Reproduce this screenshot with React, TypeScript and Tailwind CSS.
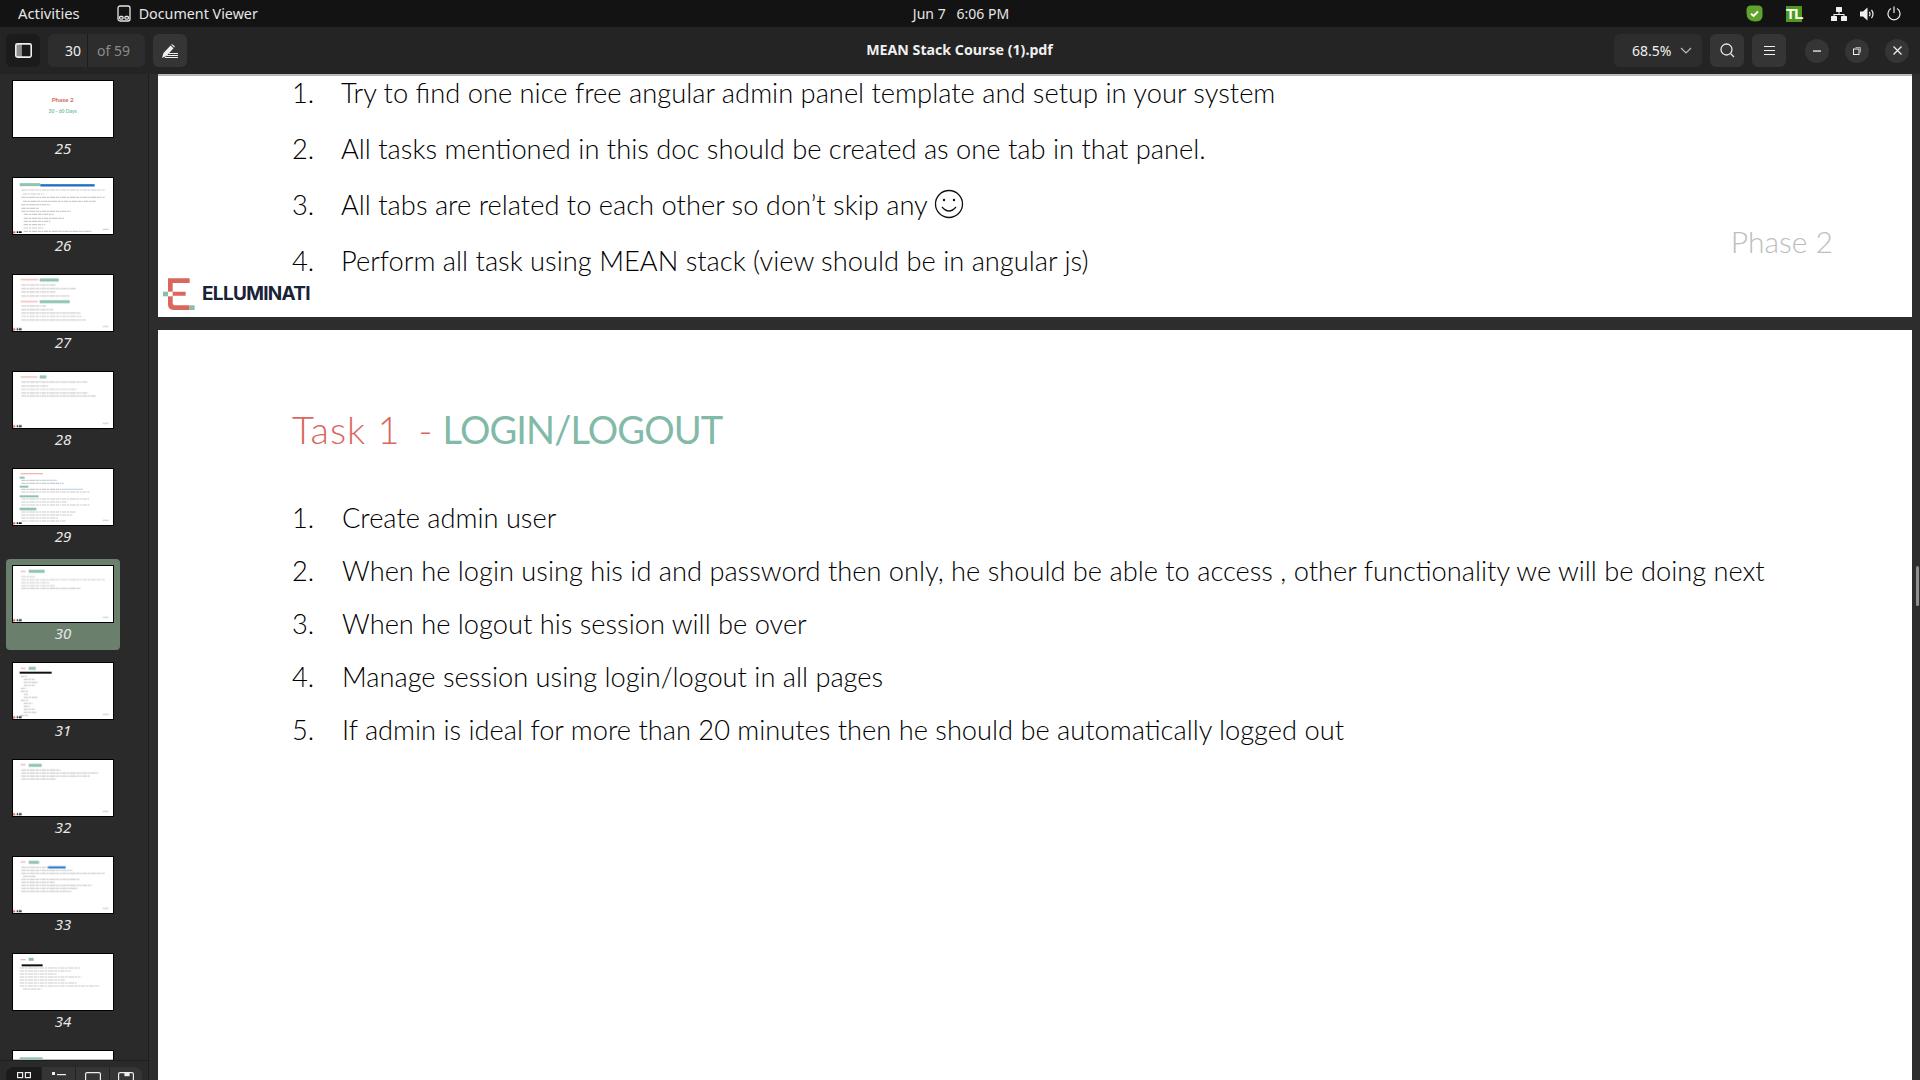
import React from "react";

type Bar = [number, number, number, string?, number?];
const R = "#f0b9b3", T = "#8fc4b2", K = "#111111", B = "#1f6fc4", L = "#c6dcf0";

const thumbs: { n: number; bars: Bar[] }[] = [
  { n: 25, bars: [] },
  { n: 26, bars: [[23, 85, 23, T, 9], [85, 248, 25, B, 7], [28, 278, 39], [32, 96, 51], [28, 278, 61], [33, 251, 73], [28, 115, 83], [28, 80, 94], [28, 176, 103], [35, 125, 112], [35, 155, 124], [35, 115, 133], [35, 100, 143], [35, 95, 153], [35, 238, 163]] },
  { n: 27, bars: [[26, 78, 17, R], [83, 140, 18, T, 9], [28, 131, 33], [28, 193, 44], [28, 131, 54], [28, 173, 66], [26, 78, 83, R], [83, 173, 83, T, 9], [28, 103, 96], [28, 123, 107], [28, 206, 117], [28, 211, 127], [28, 221, 138]] },
  { n: 28, bars: [[26, 76, 18, R], [83, 103, 18, T, 9], [28, 228, 33], [28, 108, 45], [28, 195, 55], [28, 228, 66], [28, 251, 75]] },
  { n: 29, bars: [[26, 93, 17, R], [23, 38, 29, T, 6], [28, 98, 37], [98, 135, 37, L], [28, 155, 46], [23, 49, 56, T, 6], [28, 153, 64], [153, 213, 64, L], [28, 233, 72], [23, 80, 85, T, 6], [28, 231, 93], [28, 163, 102], [28, 235, 111], [23, 73, 123, T, 8], [28, 193, 132], [28, 181, 141], [28, 138, 150], [28, 161, 159]] },
  { n: 30, bars: [[26, 41, 19, R], [50, 98, 19, T, 9], [28, 71, 35], [28, 278, 44], [28, 113, 53], [28, 128, 62], [28, 206, 70]] },
  { n: 31, bars: [[26, 41, 19, R], [50, 71, 19, T, 9], [23, 119, 32, K, 6], [26, 45, 43], [35, 68, 52], [35, 76, 61], [35, 68, 70], [26, 43, 79], [26, 48, 88], [35, 50, 97], [35, 76, 106], [26, 48, 115], [35, 61, 124], [35, 53, 133], [35, 68, 142], [35, 73, 151], [26, 48, 160]] },
  { n: 32, bars: [[26, 41, 17, R], [50, 89, 19, T, 9], [28, 146, 33], [28, 258, 42], [28, 233, 51], [28, 131, 60]] },
  { n: 33, bars: [[26, 41, 18, R], [50, 81, 19, T, 9], [28, 108, 34], [108, 161, 34, B, 6], [28, 181, 43], [28, 278, 52], [33, 71, 61], [28, 203, 70], [28, 128, 79], [28, 239, 88], [28, 197, 97], [28, 178, 106]] },
  { n: 34, bars: [[26, 41, 20, R], [50, 65, 19, T, 9], [29, 92, 37, K, 6], [23, 206, 45], [23, 176, 54], [23, 133, 63], [23, 208, 72], [23, 161, 81], [23, 193, 90], [23, 263, 99], [33, 89, 108]] },
  { n: 35, bars: [[23, 92, 27, T, 10], [3, 303, 29, "#bbbbbb", 4]] },
];

function Thumb({ n, bars }: { n: number; bars: Bar[] }) {
  const active = n === 30;
  return (
    <div className={`shrink-0 w-[114px] h-[91px] mb-[6px] pt-[6px] flex flex-col items-center rounded-[4px] ${active ? "bg-[#6a806d]" : ""}`}>
      <svg width="102" height="58" viewBox="0 0 306 174" className="block shrink-0">
        <rect x="1.5" y="1.5" width="303" height="171" fill="#fff" stroke="#000" strokeWidth="3" />
        {n === 25 && (
          <g textAnchor="middle" fontFamily="Lato, sans-serif" fontWeight="700">
            <text x="152" y="66" fontSize="19" fill="#d9675e">Phase 2</text>
            <text x="152" y="98" fontSize="15" fill="#7fbba6">30 - 60 Days</text>
          </g>
        )}
        <g className="blur-[0.4px]">
          {bars.map((b, i) =>
            b[3] ? (
              <rect key={i} x={b[0]} y={b[2] - (b[4] ?? 4) / 2} width={b[1] - b[0]} height={b[4] ?? 4} fill={b[3]} />
            ) : (
              <line key={i} x1={b[0]} x2={b[1]} y1={b[2]} y2={b[2]} stroke="#8c8c8c" strokeWidth="3.6" strokeDasharray="13 2 7 2 17 2 9 2 5 2" opacity="0.45" />
            )
          )}
          {n !== 25 && n !== 34 && n !== 35 && (
            <g>
              <rect x="3" y="163" width="7" height="6" fill="#d9675e" />
              <rect x="14" y="163" width="5" height="5" fill="#111" />
              <rect x="21" y="163" width="8" height="5" fill="#111" />
              <rect x="272" y="155" width="18" height="4" fill="#d4d4d4" />
            </g>
          )}
        </g>
      </svg>
      {n !== 35 && <div className="text-[15px] leading-[20px] italic text-[#e8e8e8] font-['Noto_Sans',sans-serif]">{n}</div>}
    </div>
  );
}

function HeaderButton({ dark, children, className = "" }: { dark?: boolean; children: React.ReactNode; className?: string }) {
  return (
    <div className={`w-[34px] h-[33px] flex items-center justify-center rounded-[6px] ${dark ? "bg-[#1b1b1b]" : "bg-[#353535]"} ${className}`}>
      {children}
    </div>
  );
}

function WinButton({ children }: { children: React.ReactNode }) {
  return <div className="w-[24px] h-[24px] rounded-full bg-[#353535] flex items-center justify-center">{children}</div>;
}

function Row({ num, gap, children, className = "" }: { num: string; gap: string; children: React.ReactNode; className?: string }) {
  return (
    <div className={`flex items-center whitespace-nowrap ${className}`}>
      <span className={gap}>{num}</span>
      <span className="flex items-center">{children}</span>
    </div>
  );
}

function Logo() {
  return (
    <div className="flex items-center h-[32px]">
      <svg width="33" height="34" viewBox="0 0 99 102" className="shrink-0">
        <path d="M15 7 H80 V21 H29 V47 H68 V59 H29 V80 Q29 88 37 88 H80 V102 H32 Q15 102 15 85 Z" fill="#d9675e" />
        <rect x="0" y="47" width="15" height="14" fill="#86c0ab" />
        <rect x="15" y="47" width="14" height="14" fill="#fff" />
        <rect x="81" y="88" width="14" height="14" fill="#86c0ab" />
      </svg>
      <span className="ml-[6px] text-[19px] leading-none font-bold text-[#1a2238] font-['Inter',sans-serif] tracking-[-0.7px]">ELLUMINATI</span>
    </div>
  );
}

export default function App() {
  return (
    <div className="w-[1920px] h-[1080px] overflow-hidden flex flex-col bg-[#2b2b2b] font-['Noto_Sans',sans-serif] relative">
      {/* Top bar */}
      <div className="h-[27px] shrink-0 bg-[#131313] flex items-center text-[14px] text-[#e6e6e6]">
        <div className="flex-1 flex items-center">
          <span className="ml-[18px] text-[14.8px]">Activities</span>
          <svg width="14" height="17" viewBox="0 0 14 17" className="ml-[37px]" fill="none" stroke="#e6e6e6" strokeWidth="1.3">
            <rect x="1" y="1" width="12" height="15" rx="2" />
            <rect x="2.5" y="11.5" width="3.6" height="2.6" rx="1" />
            <rect x="7.9" y="11.5" width="3.6" height="2.6" rx="1" />
          </svg>
          <span className="ml-[8px] text-[14.3px]">Document Viewer</span>
        </div>
        <div className="whitespace-pre pl-[21px] pb-[1px]">Jun 7   6:06 PM</div>
        <div className="flex-1 flex items-center justify-end pr-[19px]">
          <svg width="17" height="17" viewBox="0 0 17 17">
            <path d="M5 .5 H12 Q16.5 .5 16.5 5 V11 Q16.5 16.5 8.5 16.5 Q.5 16 .5 8 V5 Q.5 .5 5 .5 Z" fill="#5fa32d" />
            <path d="M5 8.8 L7.6 11 L12 6.5" stroke="#fff" strokeWidth="2" fill="none" />
          </svg>
          <div className="ml-[23px] w-[16px] h-[16px] bg-[#4d9a1e] text-white text-[15px] font-bold leading-[16px] text-center tracking-[-1px] font-['Liberation_Sans',sans-serif]">TL</div>
          <svg width="16" height="14" viewBox="0 0 16 14" className="ml-[29px]" fill="#f0f0f0">
            <rect x="5" y="0" width="6" height="5" rx=".5" />
            <rect x="0" y="9" width="6" height="5" rx=".5" />
            <rect x="10" y="9" width="6" height="5" rx=".5" />
            <path d="M7.5 5 h1 v2 h5 v2 h-1 v-1 h-9 v1 h-1 v-2 h5 z" />
          </svg>
          <svg width="15" height="14" viewBox="0 0 15 14" className="ml-[13px]" fill="none">
            <path d="M0 4.5 H3 L7.5 .5 V13.5 L3 9.5 H0 Z" fill="#f0f0f0" />
            <path d="M9.3 4.8 Q10.8 7 9.3 9.2 M11.5 2.8 Q14.5 7 11.5 11.2" stroke="#f0f0f0" strokeWidth="1.2" />
          </svg>
          <svg width="14" height="15" viewBox="0 0 14 15" className="ml-[12px]" fill="none" stroke="#f0f0f0" strokeWidth="1.2">
            <path d="M4 2.6 A6 6 0 1 0 10 2.6 M7 .5 V7" />
          </svg>
        </div>
      </div>

      {/* Header bar */}
      <div className="h-[47px] shrink-0 bg-[#242424] flex items-center text-[14px] text-[#f0f0f0]">
        <div className="flex-1 flex items-center pl-[6px]">
          <HeaderButton dark>
            <svg width="17" height="15" viewBox="0 0 16 14">
              <rect x=".75" y=".75" width="14.5" height="12.5" rx="1.5" fill="none" stroke="#efefef" strokeWidth="1.5" />
              <rect x="1" y="1" width="5.5" height="12" fill="#efefef" opacity=".55" />
            </svg>
          </HeaderButton>
          <div className="ml-[8px] w-[97px] h-[33px] rounded-[6px] bg-[#2d2d2d] flex items-center">
            <div className="w-[40px] h-full border-r border-[#1c1c1c] flex items-center justify-end pr-[6px]">30</div>
            <div className="pl-[9px] text-[#8a8a8a]">of 59</div>
          </div>
          <HeaderButton className="ml-[8px]">
            <svg width="16" height="14" viewBox="0 0 16 14" fill="#f0f0f0">
              <path d="M0 14 L1.5 9 L8.5 1.5 L11.5 4.3 L4.5 12 Z" />
              <path d="M9.3 .8 L10 0 L13 2.6 L12.2 3.5 Z" />
              <rect x="7" y="9" width="9" height="1" />
              <rect x="5" y="11" width="11" height="1" />
              <rect x="3" y="13" width="13" height="1" />
            </svg>
          </HeaderButton>
        </div>
        <div className="font-bold text-[14.2px] pl-[4px] pb-[1px]">MEAN Stack Course (1).pdf</div>
        <div className="flex-1 flex items-center justify-end pr-[11px]">
          <div className="w-[88px] h-[33px] rounded-[6px] bg-[#2d2d2d] flex items-center pl-[18px]">
            <span>68.5%</span>
            <svg width="12" height="7" viewBox="0 0 12 7" className="ml-[9px]" fill="none" stroke="#bdbdbd" strokeWidth="1.2"><path d="M1 1 L6 6 L11 1" /></svg>
          </div>
          <HeaderButton className="ml-[8px]">
            <svg width="15" height="15" viewBox="0 0 15 15" fill="none" stroke="#e6e6e6" strokeWidth="1.3">
              <circle cx="6.5" cy="6.5" r="5.5" /><path d="M10.5 10.5 L14 14" />
            </svg>
          </HeaderButton>
          <HeaderButton className="ml-[8px]">
            <svg width="11" height="10" viewBox="0 0 11 10" stroke="#f0f0f0" strokeWidth="1"><path d="M0 .5 H11 M0 4.5 H11 M0 8.5 H11" /></svg>
          </HeaderButton>
          <div className="ml-[19px] flex items-center gap-[16px]">
            <WinButton><svg width="8" height="2" viewBox="0 0 8 2"><rect width="8" height="1.3" y=".4" fill="#f0f0f0" /></svg></WinButton>
            <WinButton>
              <svg width="8" height="8" viewBox="0 0 8 8" fill="none" stroke="#f0f0f0"><rect x=".5" y="2" width="5.5" height="5.5" /><path d="M2.5 .5 H7.5 V5.5" strokeOpacity=".6" /></svg>
            </WinButton>
            <WinButton><svg width="9" height="9" viewBox="0 0 9 9" stroke="#f0f0f0" strokeWidth="1.2"><path d="M.5 .5 L8.5 8.5 M8.5 .5 L.5 8.5" /></svg></WinButton>
          </div>
        </div>
      </div>

      {/* Body */}
      <div className="flex-1 min-h-0 flex">
        <div className="w-[149px] shrink-0 flex flex-col border-r border-[#1e1e1e] bg-[#2a2a2a]">
          <div className="flex-1 min-h-0 overflow-hidden flex flex-col pl-[6px]">
            {thumbs.map((t) => <Thumb key={t.n} n={t.n} bars={t.bars} />)}
          </div>
          <div className="h-[20px] shrink-0 border-t border-[#1e1e1e] pt-[6px] pl-[6px] overflow-hidden">
            <div className="w-[136px] h-[30px] rounded-t-[8px] overflow-hidden flex">
              <div className="w-[35px] bg-[#1b1b1b] flex justify-center pt-[5px]">
                <svg width="14" height="14" viewBox="0 0 14 14" fill="none" stroke="#eee" strokeWidth="1.2"><rect x=".6" y=".6" width="5" height="5" /><rect x="8.4" y=".6" width="5" height="5" /></svg>
              </div>
              <div className="w-[34px] bg-[#353535] border-l border-[#232323] flex justify-center pt-[5px]">
                <svg width="14" height="14" viewBox="0 0 14 14" fill="#eee"><rect x="0" y="0" width="3" height="3" /><rect x="5" y="2" width="9" height="1.2" /></svg>
              </div>
              <div className="w-[34px] bg-[#353535] border-l border-[#232323] flex justify-center pt-[5px]">
                <svg width="16" height="14" viewBox="0 0 16 14" fill="none" stroke="#eee" strokeWidth="1.2"><rect x=".6" y=".6" width="14.8" height="12" rx="1.5" /></svg>
              </div>
              <div className="flex-1 bg-[#353535] border-l border-[#232323] flex justify-center pt-[5px]">
                <svg width="16" height="14" viewBox="0 0 16 14" fill="none" stroke="#eee" strokeWidth="1.2"><rect x=".6" y=".6" width="14.8" height="12" rx="1.5" /><rect x="7" y=".6" width="4" height="3" fill="#eee" /></svg>
              </div>
            </div>
          </div>
        </div>

        {/* Document */}
        <div className="flex-1 min-w-0 pl-[9px] pr-[8px] flex flex-col bg-[#2d2d2d] relative">
          <div className="h-[243px] shrink-0 bg-white border-t-2 border-[#b8b8b8] flex font-['Lato',sans-serif] font-light text-black">
            <div className="flex-1 flex flex-col">
              <div className="pl-[134px] flex flex-col text-[27.3px] -mt-[1px]">
                <div className="h-[36px] flex items-center"><Row num="1." gap="w-[49px]">Try to find one nice free angular admin panel template and setup in your system</Row></div>
                <div className="mt-[20px] h-[36px] flex items-center"><Row num="2." gap="w-[49px]">All tasks mentioned in this doc should be created as one tab in that panel.</Row></div>
                <div className="mt-[20px] h-[36px] flex items-center">
                  <Row num="3." gap="w-[49px]">
                    All tabs are related to each other so don’t skip any
                    <svg width="30" height="30" viewBox="0 0 30 30" className="ml-[6px] -mt-[2px]" fill="none" stroke="#111" strokeWidth="1.3">
                      <circle cx="15" cy="15" r="13.5" />
                      <circle cx="10" cy="11" r="1.2" fill="#111" stroke="none" />
                      <circle cx="20" cy="11" r="1.2" fill="#111" stroke="none" />
                      <path d="M8 18 Q15 26 22 18" />
                    </svg>
                  </Row>
                </div>
                <div className="mt-[20px] h-[36px] flex items-center"><Row num="4." gap="w-[49px]">Perform all task using MEAN stack (view should be in angular js)</Row></div>
              </div>
              <div className="pl-[5px] -mt-[2px]"><Logo /></div>
            </div>
            <div className="pr-[79px] pt-[145px] text-[30px] leading-[40px] text-[#bdbdbd]">Phase 2</div>
          </div>
          <div className="mt-[13px] flex-1 bg-white font-['Lato',sans-serif] font-light text-black">
            <div className="pl-[134px] pt-[72px] text-[38px] leading-[54px] whitespace-nowrap flex items-center">
              <span className="text-[#d9675e] tracking-[1px]">Task 1</span>
              <span className="text-[#d9675e] ml-[18px]">-</span>
              <span className="text-[#82baa7] font-normal ml-[10px] tracking-[-0.9px]">LOGIN/LOGOUT</span>
            </div>
            <div className="pl-[134px] pt-[44px] flex flex-col gap-[17px] text-[27.25px]">
              <div className="h-[36px] flex items-center"><Row num="1." gap="w-[50px]">Create admin user</Row></div>
              <div className="h-[36px] flex items-center"><Row num="2." gap="w-[50px]">When he login using his id and password then only, he should be able to access , other functionality we will be doing next</Row></div>
              <div className="h-[36px] flex items-center"><Row num="3." gap="w-[50px]">When he logout his session will be over</Row></div>
              <div className="h-[36px] flex items-center"><Row num="4." gap="w-[50px]">Manage session using login/logout in all pages</Row></div>
              <div className="h-[36px] flex items-center"><Row num="5." gap="w-[50px]">If admin is ideal for more than 20 minutes then he should be automatically logged out</Row></div>
            </div>
          </div>
          <div className="absolute right-[1px] top-[492px] w-[3px] h-[40px] rounded-full bg-[#8f8f8f]" />
        </div>
      </div>
    </div>
  );
}
